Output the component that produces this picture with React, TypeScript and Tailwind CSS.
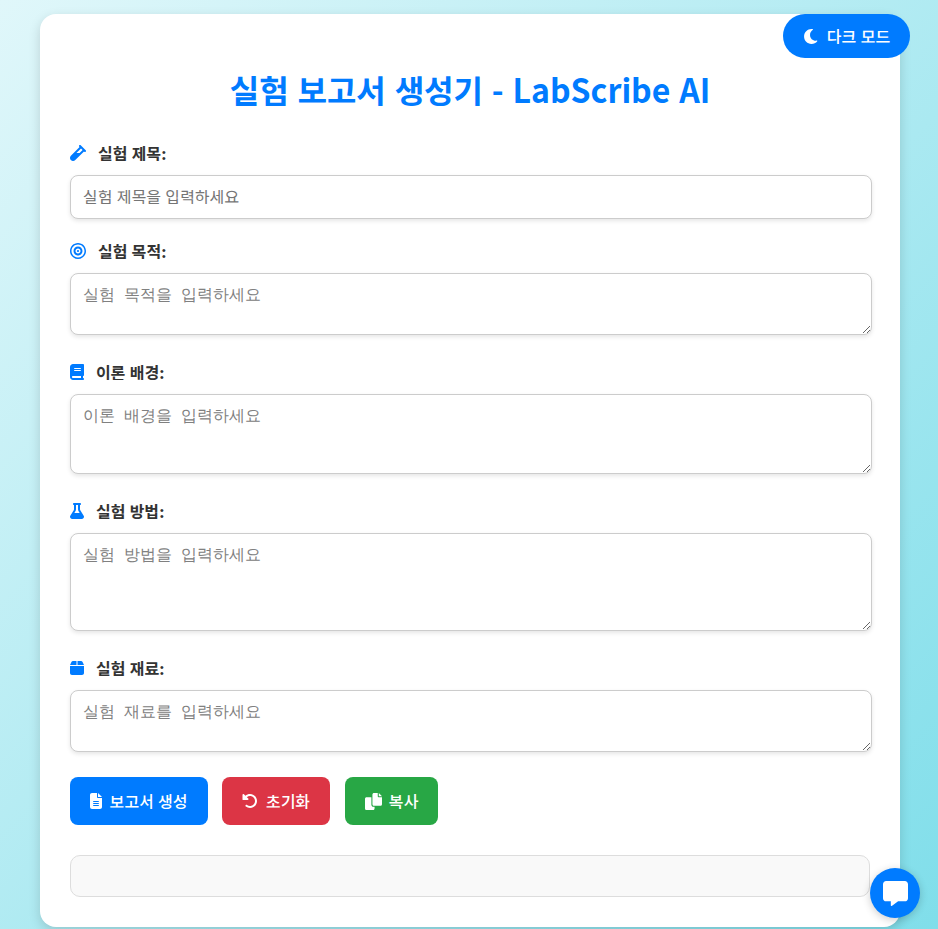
import { FaVial, FaBook, FaFlask, FaBox, FaFileLines, FaMessage } from "react-icons/fa6";
import type { ReactNode } from "react";

const sans = "[font-family:'Noto_Sans_KR',sans-serif] [word-spacing:0.8px]";

function Label({ icon, text }: { icon: ReactNode; text: string }) {
  return (
    <label className="flex items-center h-[24px] mb-[10px] gap-[12px] text-[16px] font-bold text-[#333]">
      {icon}
      {text}
    </label>
  );
}

function Area({ placeholder, h, mb }: { placeholder: string; h: string; mb: string }) {
  return (
    <textarea
      placeholder={placeholder}
      className={`block w-[802px] ${h} ${mb} px-[12px] pt-[11px] pb-[9px] border border-[#ccc] rounded-[8px] shadow-[0_2px_4px_rgba(0,0,0,0.1)] text-[16px] leading-[normal] [font-family:monospace] tracking-[-0.15px] font-light placeholder:text-[#808080] outline-none bg-white`}
    />
  );
}

const ic = "text-[#007bff] h-[16px] shrink-0";

function Icon({ d, className }: { d: string; className: string }) {
  return (
    <svg viewBox="0 0 512 512" fill="currentColor" className={className}>
      <path d={d} />
    </svg>
  );
}

const undo = "M480 256c0 123.4-100.5 223.9-223.9 223.9c-48.84 0-95.17-15.58-134.2-44.86c-14.12-10.59-16.97-30.66-6.375-44.81c10.59-14.12 30.62-16.94 44.81-6.375c27.84 20.91 61 31.94 95.88 31.94C344.3 415.8 416 344.1 416 256s-71.69-159.8-159.8-159.8c-37.46 0-73.09 13.49-101.3 36.64l45.12 45.14c17.01 17.02 4.955 46.1-19.1 46.1H35.17C24.58 224.1 16 215.5 16 204.9V59.04c0-24.04 29.07-36.08 46.06-19.07l47.6 47.63C149.9 52.71 201.5 32.11 256.1 32.11C379.5 32.11 480 132.6 480 256z";
const copy = "M384 96L384 0h-112c-26.51 0-48 21.49-48 48v288c0 26.51 21.49 48 48 48H464c26.51 0 48-21.49 48-48V128h-95.1C398.4 128 384 113.6 384 96zM416 0v96h96L416 0zM192 352V128h-144c-26.51 0-48 21.49-48 48v288c0 26.51 21.49 48 48 48h192c26.51 0 48-21.49 48-48L288 416h-32C220.7 416 192 387.3 192 352z";
const moon = "M32 256c0-123.8 100.3-224 223.8-224c11.36 0 29.7 1.668 40.9 3.746c9.616 1.777 11.75 14.63 3.279 19.44C245 86.5 211.2 144.6 211.2 207.8c0 109.7 99.71 193 208.3 172.3c9.561-1.805 16.28 9.324 10.11 16.95C387.9 448.6 324.8 480 255.8 480C132.1 480 32 379.6 32 256z";
const bullseye = "M288 256C288 273.7 273.7 288 256 288C238.3 288 224 273.7 224 256C224 238.3 238.3 224 256 224C273.7 224 288 238.3 288 256zM112 256C112 176.5 176.5 112 256 112C335.5 112 400 176.5 400 256C400 335.5 335.5 400 256 400C176.5 400 112 335.5 112 256zM256 336C300.2 336 336 300.2 336 256C336 211.8 300.2 176 256 176C211.8 176 176 211.8 176 256C176 300.2 211.8 336 256 336zM512 256C512 397.4 397.4 512 256 512C114.6 512 0 397.4 0 256C0 114.6 114.6 0 256 0C397.4 0 512 114.6 512 256zM256 48C141.1 48 48 141.1 48 256C48 370.9 141.1 464 256 464C370.9 464 464 370.9 464 256C464 141.1 370.9 48 256 48z";

export default function App() {
  return (
    <div className={`relative h-[929px] overflow-hidden bg-[linear-gradient(135deg,#e0f7fa,#80deea)] pt-[14px] pl-[40px] ${sans}`}>
      <div className="w-[860px] h-[913px] bg-white rounded-[16px] shadow-[0_4px_12px_rgba(0,0,0,0.15)] pt-[51px] px-[30px]">
        <h1 className="text-[32px] leading-[48px] font-bold text-[#007bff] text-center mb-[28px] [word-spacing:1.6px]">실험 보고서 생성기 - LabScribe AI</h1>
        <Label icon={<FaVial className={`${ic} w-[16px]`} />} text="실험 제목:" />
        <input
          placeholder="실험 제목을 입력하세요"
          className="block w-[802px] h-[44px] mb-[20px] px-[12px] pb-[3px] border border-[#ccc] rounded-[8px] shadow-[0_2px_4px_rgba(0,0,0,0.1)] text-[16px] [word-spacing:0.8px] placeholder:text-[#757575] outline-none bg-white"
        />
        <Label icon={<Icon d={bullseye} className={`${ic} w-[16px]`} />} text="실험 목적:" />
        <Area placeholder="실험 목적을 입력하세요" h="h-[62px]" mb="mb-[25px]" />
        <Label icon={<FaBook className={`${ic} w-[14px]`} />} text="이론 배경:" />
        <Area placeholder="이론 배경을 입력하세요" h="h-[80px]" mb="mb-[25px]" />
        <Label icon={<FaFlask className={`${ic} w-[14px]`} />} text="실험 방법:" />
        <Area placeholder="실험 방법을 입력하세요" h="h-[98px]" mb="mb-[25px]" />
        <Label icon={<FaBox className={`${ic} w-[14px]`} />} text="실험 재료:" />
        <Area placeholder="실험 재료를 입력하세요" h="h-[62px]" mb="mb-[25px]" />
        <div className="flex gap-[14px]">
          <button className="flex items-center justify-center gap-[7px] w-[138px] h-[48px] rounded-[8px] bg-[#007bff] text-white text-[16px] font-medium [word-spacing:0.8px]"><FaFileLines className="h-[16px] w-[12px]" />보고서 생성</button>
          <button className="flex items-center justify-center gap-[8px] w-[108px] h-[48px] rounded-[8px] bg-[#dc3545] text-white text-[16px] font-medium"><Icon d={undo} className="h-[16px] w-[16px]" />초기화</button>
          <button className="flex items-center justify-center gap-[7px] w-[93px] h-[48px] ml-[1px] rounded-[8px] bg-[#28a745] text-white text-[16px] font-medium"><Icon d={copy} className="h-[17px] w-[17px]" />복사</button>
        </div>
        <div className="mt-[30px] w-[800px] h-[42px] bg-[#f9f9f9] border border-[#ddd] rounded-[10px]" />
      </div>
      <button className="absolute top-[14px] right-[28px] w-[127px] h-[44px] flex items-center justify-center gap-[7px] rounded-full bg-[#007bff] text-white text-[16px] font-medium [word-spacing:0.8px]"><Icon d={moon} className="h-[17px] w-[17px]" />다크 모드</button>
      <button className="absolute top-[868px] left-[870px] w-[50px] h-[50px] flex items-center justify-center rounded-full bg-[#007bff] text-white text-[25px] shadow-[0_2px_8px_rgba(0,0,0,0.2)]"><FaMessage /></button>
    </div>
  );
}
